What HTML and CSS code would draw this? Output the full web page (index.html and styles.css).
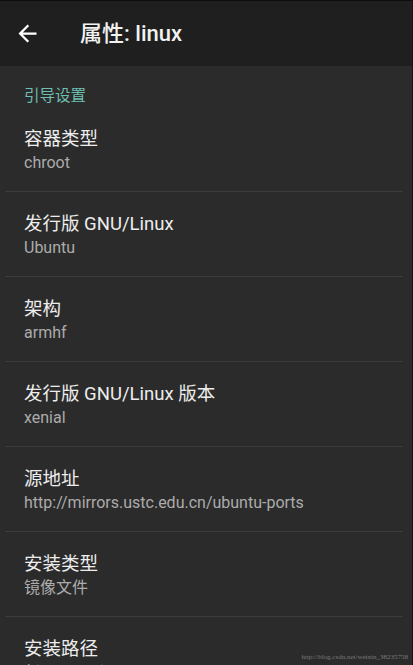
FILE: index.html
```html
<!DOCTYPE html>
<html lang="zh-CN">
  <head>
    <meta charset="UTF-8" />
    <meta name="viewport" content="width=device-width, initial-scale=1.0" />
    <title>属性: linux</title>
    <link rel="stylesheet" href="styles.css">
  </head>
  <body>
    <div class="screen">
      <header class="toolbar">
        <button class="back" aria-label="返回">
          <svg viewBox="0 0 24 24" width="27" height="27">
            <path d="M20 11H7.83l5.59-5.59L12 4l-8 8 8 8 1.41-1.41L7.83 13H20v-2z" fill="#ffffff" />
          </svg>
        </button>
        <h1 class="title">属性: linux</h1>
      </header>

      <main class="prefs">
        <div class="category">引导设置</div>

        <div class="pref">
          <div class="pref-title">容器类型</div>
          <div class="pref-summary">chroot</div>
        </div>
        <div class="pref">
          <div class="pref-title">发行版 GNU/Linux</div>
          <div class="pref-summary">Ubuntu</div>
        </div>
        <div class="pref">
          <div class="pref-title">架构</div>
          <div class="pref-summary">armhf</div>
        </div>
        <div class="pref">
          <div class="pref-title">发行版 GNU/Linux 版本</div>
          <div class="pref-summary">xenial</div>
        </div>
        <div class="pref">
          <div class="pref-title">源地址</div>
          <div class="pref-summary">http://mirrors.ustc.edu.cn/ubuntu-ports</div>
        </div>
        <div class="pref">
          <div class="pref-title">安装类型</div>
          <div class="pref-summary">镜像文件</div>
        </div>
        <div class="pref">
          <div class="pref-title">安装路径</div>
          <div class="pref-summary">${ENV_DIR}/linux.img</div>
        </div>
      </main>

      <div class="watermark">http://blog.csdn.net/weixin_38235758</div>
    </div>
  </body>
</html>
```

FILE: styles.css
```css
/* Base */
html,
body {
  margin: 0;
  height: 100%;
  overflow: hidden;
}

body {
  font-family: Roboto, "Noto Sans CJK SC", "Noto Sans", sans-serif;
  background-color: #2b2b2b;
  color: #ececec;
}

.screen {
  position: relative;
  height: 100%;
  border-top: 1px solid #0c0c0c;
  border-right: 1px solid #141414;
  box-sizing: border-box;
}

/* Toolbar */
.toolbar {
  display: flex;
  align-items: center;
  height: 65px;
  background-color: #1f1f1f;
}

.back {
  display: flex;
  align-items: center;
  justify-content: center;
  width: 27px;
  height: 27px;
  margin-left: 14px;
  padding: 0;
  border: none;
  background: none;
}

.title {
  margin: 0 0 0 39px;
  font-size: 22px;
  font-weight: 500;
  color: #f2f2f2;
  line-height: 28px;
}

/* Preference list */
.category {
  padding: 20px 0 0 24px;
  font-size: 15.5px;
  line-height: 20px;
  color: #6fbfb0;
}

.pref {
  margin: 0 9px 0 5px;
  padding: 20px 0 18px 19px;
  border-bottom: 1px solid #3c3c3c;
}

.category + .pref {
  padding-top: 21px;
}

.pref-title {
  font-size: 18.5px;
  line-height: 24px;
  color: #ededed;
}

.pref-summary {
  margin-top: 2px;
  font-size: 16px;
  line-height: 20px;
  color: #ababab;
}

/* Source watermark over the bottom corner */
.watermark {
  position: absolute;
  right: 4px;
  bottom: 4px;
  font-family: "Liberation Serif", serif;
  font-size: 7px;
  color: #7a7a7a;
}
```
